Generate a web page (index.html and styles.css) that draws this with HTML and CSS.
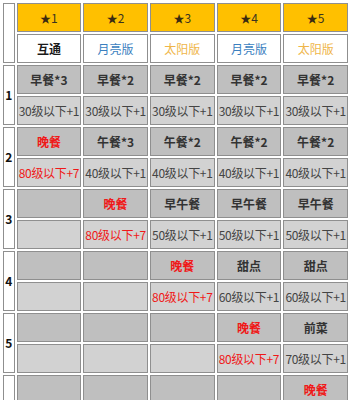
FILE: index.html
```html
<!DOCTYPE html>
<html>
<head>
<meta charset="utf-8">
<link rel="stylesheet" href="styles.css">
</head>
<body>
<table class="grid">
  <tr>
    <td class="lbl" rowspan="2"></td>
    <td class="c star"><span class="s">★</span>1</td>
    <td class="c star"><span class="s">★</span>2</td>
    <td class="c star"><span class="s">★</span>3</td>
    <td class="c star"><span class="s">★</span>4</td>
    <td class="c star"><span class="s">★</span>5</td>
  </tr>
  <tr>
    <td class="ver v-all">互通</td>
    <td class="ver v-moon">月亮版</td>
    <td class="ver v-sun">太阳版</td>
    <td class="ver v-moon">月亮版</td>
    <td class="ver v-sun">太阳版</td>
  </tr>

  <tr>
    <td class="lbl num" rowspan="2">1</td>
    <td class="meal">早餐*3</td>
    <td class="meal">早餐*2</td>
    <td class="meal">早餐*2</td>
    <td class="meal">早餐*2</td>
    <td class="meal">早餐*2</td>
  </tr>
  <tr>
    <td class="lvl">30级以下+1</td>
    <td class="lvl">30级以下+1</td>
    <td class="lvl">30级以下+1</td>
    <td class="lvl">30级以下+1</td>
    <td class="lvl">30级以下+1</td>
  </tr>

  <tr>
    <td class="lbl num" rowspan="2">2</td>
    <td class="meal red">晚餐</td>
    <td class="meal">午餐*3</td>
    <td class="meal">午餐*2</td>
    <td class="meal">午餐*2</td>
    <td class="meal">午餐*2</td>
  </tr>
  <tr>
    <td class="lvl red">80级以下+7</td>
    <td class="lvl">40级以下+1</td>
    <td class="lvl">40级以下+1</td>
    <td class="lvl">40级以下+1</td>
    <td class="lvl">40级以下+1</td>
  </tr>

  <tr>
    <td class="lbl num" rowspan="2">3</td>
    <td class="meal"></td>
    <td class="meal red">晚餐</td>
    <td class="meal">早午餐</td>
    <td class="meal">早午餐</td>
    <td class="meal">早午餐</td>
  </tr>
  <tr>
    <td class="lvl"></td>
    <td class="lvl red">80级以下+7</td>
    <td class="lvl">50级以下+1</td>
    <td class="lvl">50级以下+1</td>
    <td class="lvl">50级以下+1</td>
  </tr>

  <tr>
    <td class="lbl num" rowspan="2">4</td>
    <td class="meal"></td>
    <td class="meal"></td>
    <td class="meal red">晚餐</td>
    <td class="meal">甜点</td>
    <td class="meal">甜点</td>
  </tr>
  <tr>
    <td class="lvl"></td>
    <td class="lvl"></td>
    <td class="lvl red">80级以下+7</td>
    <td class="lvl">60级以下+1</td>
    <td class="lvl">60级以下+1</td>
  </tr>

  <tr>
    <td class="lbl num" rowspan="2">5</td>
    <td class="meal"></td>
    <td class="meal"></td>
    <td class="meal"></td>
    <td class="meal red">晚餐</td>
    <td class="meal">前菜</td>
  </tr>
  <tr>
    <td class="lvl"></td>
    <td class="lvl"></td>
    <td class="lvl"></td>
    <td class="lvl red">80级以下+7</td>
    <td class="lvl">70级以下+1</td>
  </tr>

  <tr>
    <td class="lbl num" rowspan="2"></td>
    <td class="meal"></td>
    <td class="meal"></td>
    <td class="meal"></td>
    <td class="meal"></td>
    <td class="meal red">晚餐</td>
  </tr>
  <tr>
    <td class="lvl"></td>
    <td class="lvl"></td>
    <td class="lvl"></td>
    <td class="lvl"></td>
    <td class="lvl"></td>
  </tr>
</table>
</body>
</html>
```

FILE: styles.css
```css
html, body {
  margin: 0;
  padding: 0;
  overflow: hidden;
  background: #ffffff;
}

.grid {
  margin: 1px 0 0 1px;
  border-collapse: separate;
  border-spacing: 2px;
  table-layout: fixed;
  font-family: "Noto Sans CJK SC", "Noto Sans", sans-serif;
  font-size: 12px;
  line-height: 14px;
  color: #333333;
}

.grid td {
  border: 1px solid #8f8f8f;
  padding: 0;
  height: 27px;
  text-align: center;
  vertical-align: middle;
  white-space: nowrap;
  overflow: hidden;
}

.lbl {
  width: 10px;
  background: #ffffff;
}

.num {
  font-weight: bold;
  color: #111111;
  font-size: 12px;
}

.c {
  width: 63px;
}

.star {
  background: #ffc000;
  color: #3a3320;
}

.star .s {
  font-size: 11px;
  color: #3a2a10;
}

.ver {
  background: #ffffff;
}

.v-all {
  color: #1a1a1a;
  font-weight: bold;
}

.v-moon {
  color: #3b7fbf;
}

.v-sun {
  color: #efb64a;
}

.meal {
  background: #bfbfbf;
  font-weight: bold;
  color: #333333;
}

.lvl {
  background: #d2d2d2;
  color: #444444;
  letter-spacing: -0.3px;
}

.red {
  color: #f01818;
}
```
